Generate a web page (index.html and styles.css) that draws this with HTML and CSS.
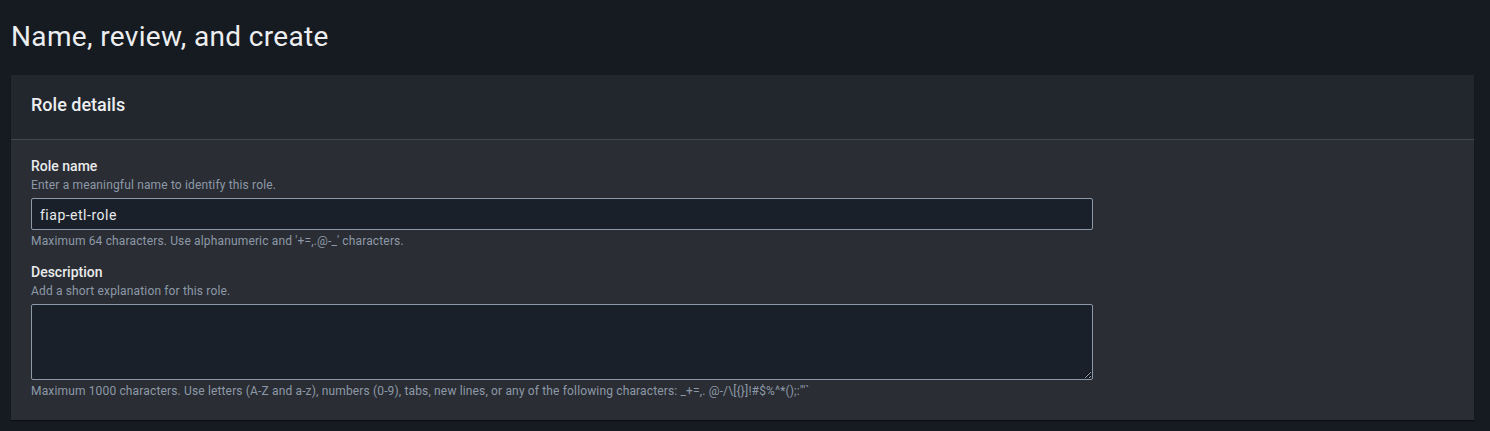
FILE: index.html
```html
<!DOCTYPE html>
<html lang="en">
<head>
<meta charset="utf-8">
<title>Name, review, and create</title>
<link rel="stylesheet" href="styles.css">
</head>
<body>
<main class="page">
  <h1 class="page-title">Name, review, and create</h1>
  <section class="card">
    <header class="card-header">
      <h2 class="card-title">Role details</h2>
    </header>
    <div class="card-body">
      <div class="field">
        <label class="field-label" for="role-name">Role name</label>
        <div class="field-desc">Enter a meaningful name to identify this role.</div>
        <input class="text-input" id="role-name" type="text" value="fiap-etl-role">
        <div class="field-constraint">Maximum 64 characters. Use alphanumeric and '+=,.@-_' characters.</div>
      </div>
      <div class="field field-second">
        <label class="field-label" for="role-desc">Description</label>
        <div class="field-desc">Add a short explanation for this role.</div>
        <textarea class="text-area" id="role-desc"></textarea>
        <div class="field-constraint">Maximum 1000 characters. Use letters (A-Z and a-z), numbers (0-9), tabs, new lines, or any of the following characters: _+=,. @-/\[{}]!#$%^*();:"'`</div>
      </div>
    </div>
  </section>
</main>
</body>
</html>
```

FILE: styles.css
```css
* { box-sizing: border-box; }

html, body {
  margin: 0;
  padding: 0;
  background: #161a21;
  height: 100%;
}

body {
  font-family: Roboto, "Open Sans", "Liberation Sans", sans-serif;
  color: #e9ebed;
}

.page {
  padding: 0 16px 0 11px;
}

.page-title {
  margin: 19px 0 20px;
  font-size: 28px;
  line-height: 36px;
  font-weight: 400;
  letter-spacing: 0.35px;
  color: #eceef0;
}

.card {
  background: #2a2d33;
  box-shadow: 0 1px 1px rgba(0, 0, 0, 0.45);
}

.card-header {
  background: #22262d;
  padding: 18px 20px 22px;
  border-bottom: 1px solid #414750;
}

.card-title {
  margin: 0;
  font-size: 18px;
  line-height: 24px;
  font-weight: 500;
  color: #eceef0;
}

.card-body {
  padding: 15px 20px 21px;
}

.field {
  display: flex;
  flex-direction: column;
  align-items: flex-start;
}

.field-second {
  margin-top: 12px;
}

.field-label {
  font-size: 14px;
  line-height: 22px;
  font-weight: 500;
  color: #e9ebed;
}

.field-desc,
.field-constraint {
  font-size: 12px;
  line-height: 16px;
  letter-spacing: 0.15px;
  color: #8d99a8;
}

.field-constraint {
  margin-top: 3px;
}

.text-input,
.text-area {
  margin-top: 5px;
  width: 1062px;
  background: #1a2029;
  border: 1px solid #8d99a8;
  border-radius: 2px;
  color: #e9ebed;
  font-family: inherit;
  font-size: 14px;
  outline: none;
}

.text-input {
  height: 32px;
  line-height: 22px;
  padding: 5px 8px 3px;
  letter-spacing: 0.5px;
}

.text-area {
  height: 76px;
  padding: 4px 8px;
  resize: vertical;
  display: block;
}
```
